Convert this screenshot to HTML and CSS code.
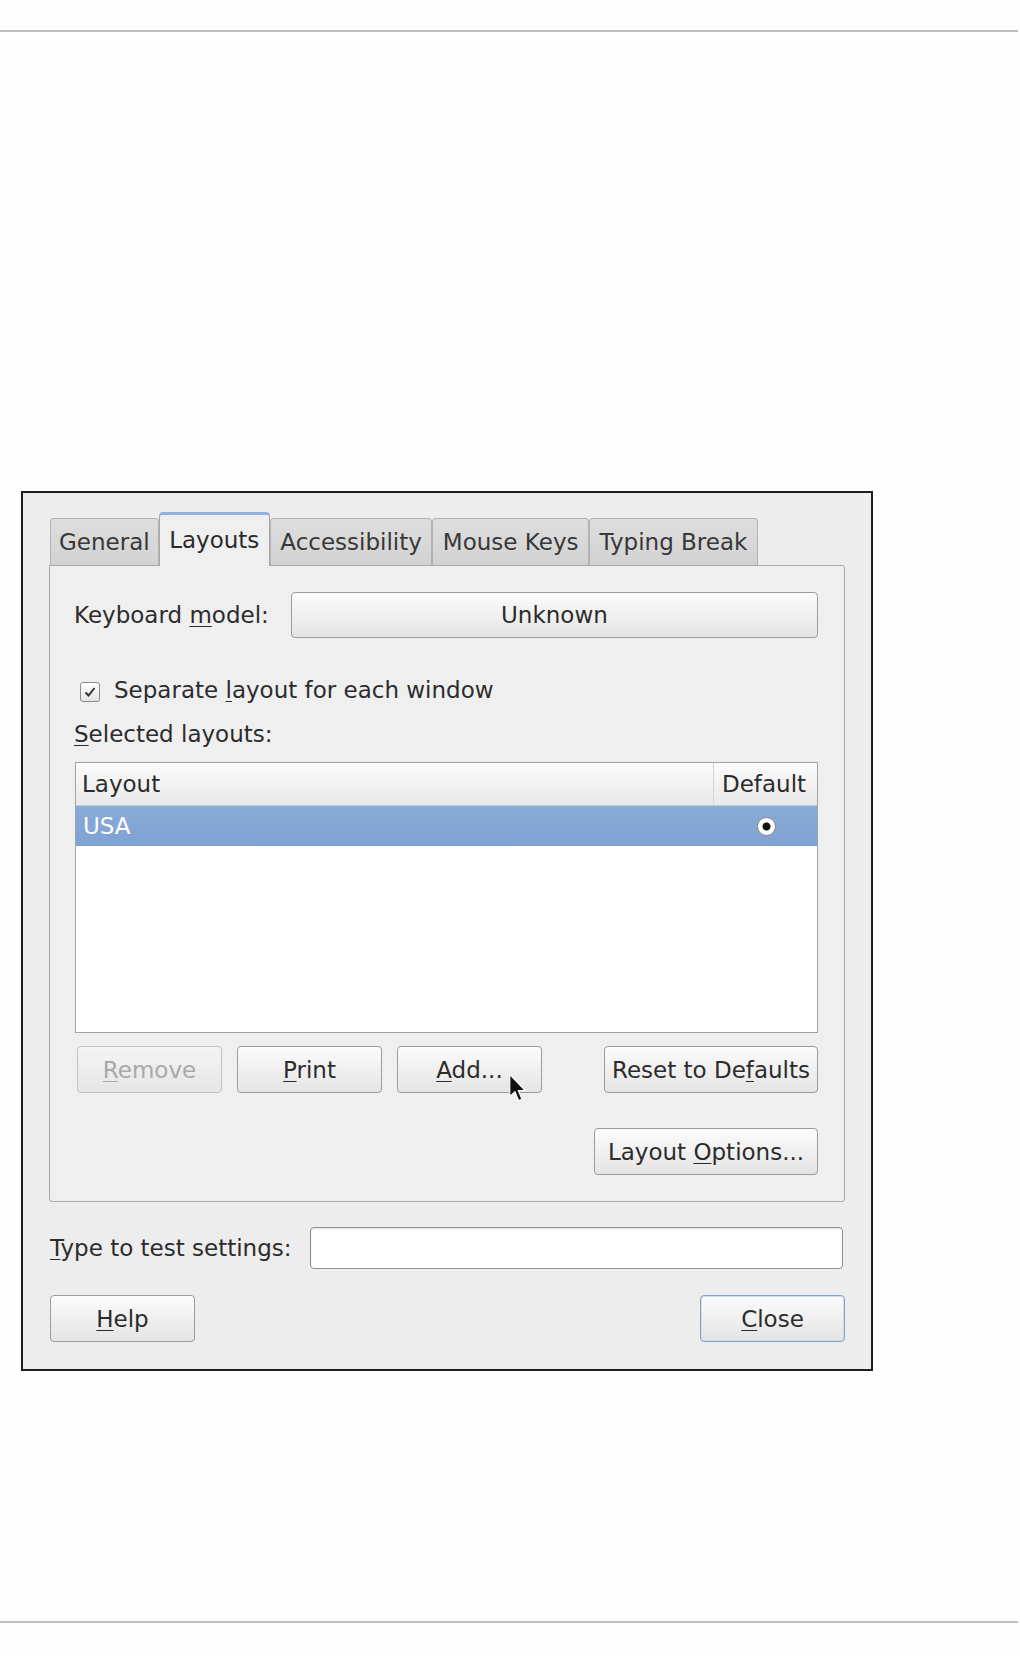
FILE: index.html
```html
<!DOCTYPE html>
<html lang="en">
<head>
    <meta charset="UTF-8">
    <title>Keyboard Preferences</title>
    <link rel="stylesheet" href="styles.css">
</head>
<body>
    <div class="rule"></div>

    <div class="dialog">
        <div class="notebook">
            <div class="tabs">
                <div class="tab">General</div>
                <div class="tab active">Layouts</div>
                <div class="tab">Accessibility</div>
                <div class="tab">Mouse Keys</div>
                <div class="tab">Typing Break</div>
            </div>

            <div class="panel">
                <div class="model-row">
                    <span class="label">Keyboard <u>m</u>odel:</span>
                    <div class="combo">Unknown</div>
                </div>

                <div class="check-row">
                    <span class="checkbox">
                        <svg width="14" height="14" viewBox="0 0 14 14">
                            <path d="M2.5 7.5 L5.5 10.5 L11.5 3" fill="none" stroke="#333" stroke-width="2"/>
                        </svg>
                    </span>
                    <span>Separate <u>l</u>ayout for each window</span>
                </div>

                <div class="section-label"><u>S</u>elected layouts:</div>

                <div class="tree">
                    <div class="tree-head">
                        <div class="col-layout">Layout</div>
                        <div class="col-default">Default</div>
                    </div>
                    <div class="tree-row selected">
                        <div class="col-layout">USA</div>
                        <div class="col-default"><span class="radio"></span></div>
                    </div>
                </div>

                <div class="button-row">
                    <button class="btn btn-small" disabled><u>R</u>emove</button>
                    <button class="btn btn-small"><u>P</u>rint</button>
                    <button class="btn btn-small"><u>A</u>dd...</button>
                    <button class="btn btn-reset">Reset to De<u>f</u>aults</button>
                    <svg class="pointer" width="17" height="28" viewBox="0 0 12 20">
                        <path d="M0.5 0.5 L0.5 16 L4.2 12.6 L6.8 19 L9.2 18 L6.6 11.8 L11.5 11.8 Z" fill="#111" stroke="#fff" stroke-width="0.8"/>
                    </svg>
                </div>

                <div class="options-row">
                    <button class="btn btn-options">Layout <u>O</u>ptions...</button>
                </div>
            </div>
        </div>

        <div class="test-row">
            <span class="label"><u>T</u>ype to test settings:</span>
            <div class="entry"></div>
        </div>

        <div class="action-row">
            <button class="btn btn-small"><u>H</u>elp</button>
            <button class="btn btn-small btn-default"><u>C</u>lose</button>
        </div>
    </div>

    <div class="rule rule-bottom"></div>
</body>
</html>
```

FILE: styles.css
```css
* {
    margin: 0;
    padding: 0;
    box-sizing: border-box;
}

body {
    font-family: 'DejaVu Sans', 'Liberation Sans', sans-serif;
    font-size: 23px;
    color: #2c2c2c;
    background-color: #fefefe;
}

u {
    text-decoration-thickness: 1px;
    text-underline-offset: 3px;
}

.rule {
    margin-top: 30px;
    width: 1018px;
    height: 2px;
    background-color: #bcbcbc;
}

.rule-bottom {
    margin-top: 250px;
}

/* window */
.dialog {
    margin: 459px 0 0 21px;
    width: 852px;
    border: 2px solid #1e1e1e;
    background-color: #ededed;
    padding: 19px 26px 27px 26px;
}

/* tabs */
.tabs {
    display: flex;
    align-items: flex-end;
    height: 53px;
    padding-left: 1px;
}

.tab {
    height: 47px;
    padding: 0 9.5px;
    display: flex;
    align-items: center;
    background: linear-gradient(#dedede, #d2d2d2);
    border: 1px solid #b2b2b2;
    border-bottom: none;
    border-radius: 4px 4px 0 0;
    color: #383838;
    white-space: nowrap;
}

.tab:first-child {
    padding: 0 8px;
}

.tab.active {
    position: relative;
    z-index: 1;
    height: 54px;
    margin-bottom: -1px;
    background: #efefef;
    border-color: #a8a8a8;
    border-top: 3px solid #8fb2de;
    color: #2a2a2a;
    padding-bottom: 2px;
}

.panel {
    border: 1px solid #a9a9a9;
    border-radius: 0 3px 3px 3px;
    background-color: #efefef;
    padding: 0 26px 26px 25px;
}

.model-row {
    display: flex;
    align-items: center;
    gap: 22px;
    margin-top: 26px;
    height: 46px;
}

.model-row .label {
    margin-left: -1px;
}

.combo {
    flex: 1;
    height: 46px;
    display: flex;
    align-items: center;
    justify-content: center;
    border: 1px solid #9c9c9c;
    border-radius: 4px;
    background: linear-gradient(#fbfbfb, #e5e5e5);
}

.check-row {
    display: flex;
    align-items: center;
    gap: 14px;
    margin: 37px 0 0 5px;
    height: 30px;
}

.checkbox {
    width: 20px;
    height: 20px;
    margin-top: 4px;
    display: flex;
    align-items: center;
    justify-content: center;
    border: 1px solid #8a8a8a;
    border-radius: 3px;
    background: linear-gradient(#ffffff, #e4e4e4);
}

.section-label {
    margin-top: 14px;
    height: 30px;
    line-height: 30px;
    margin-left: -1px;
}

/* layouts list */
.tree {
    margin-top: 13px;
    height: 271px;
    border: 1px solid #a3a3a3;
    background-color: #fff;
}

.tree-head,
.tree-row {
    display: flex;
}

.tree-head {
    height: 43px;
    background: linear-gradient(#fbfbfb, #e9e9e9);
    border-bottom: 1px solid #c9c9c9;
}

.tree-row {
    height: 40px;
}

.col-layout {
    flex: 1;
    display: flex;
    align-items: center;
    padding-left: 6px;
}

.col-default {
    width: 104px;
    display: flex;
    align-items: center;
    padding-left: 8px;
}

.tree-head .col-default {
    border-left: 1px solid #d6d6d6;
}

.tree-row.selected {
    background: linear-gradient(#8aabd8, #7ea2d3);
    color: #fff;
}

.tree-row .col-layout {
    padding-left: 7px;
}

.tree-row .col-default {
    justify-content: center;
    padding: 0 0 0 3px;
}

.radio {
    width: 19px;
    height: 19px;
    border-radius: 50%;
    border: 1px solid #8a8a8a;
    background: radial-gradient(circle, #111 0 3.5px, #fff 4.5px);
}

/* buttons */
.btn {
    font-family: inherit;
    font-size: 23px;
    color: #2c2c2c;
    height: 47px;
    border: 1px solid #9b9b9b;
    border-radius: 4px;
    background: linear-gradient(#fcfcfc, #e4e4e4);
    cursor: pointer;
}

.btn:disabled {
    color: #a9a9a9;
    border-color: #c2c2c2;
    background: linear-gradient(#f4f4f4, #e6e6e6);
}

.btn-small {
    width: 145px;
}

.btn-reset {
    width: 214px;
    margin-left: auto;
}

.btn-options {
    width: 224px;
}

.btn-default {
    border-color: #84a3cc;
    box-shadow: inset 0 0 0 1px #cfdcee;
}

.button-row {
    position: relative;
    display: flex;
    gap: 15px;
    margin: 13px 0 0 2px;
}

.pointer {
    position: absolute;
    left: 432px;
    top: 28px;
}

.options-row {
    display: flex;
    justify-content: flex-end;
    margin-top: 35px;
}

/* bottom of dialog */
.test-row {
    display: flex;
    align-items: center;
    gap: 18px;
    margin-top: 25px;
    padding-left: 1px;
}

.entry {
    flex: 1;
    height: 42px;
    border: 1px solid #909090;
    border-radius: 4px;
    background-color: #fff;
    box-shadow: inset 0 1px 2px rgba(0, 0, 0, 0.12);
    margin-right: 2px;
}

.action-row {
    display: flex;
    justify-content: space-between;
    margin-top: 26px;
    padding-left: 1px;
}
```
